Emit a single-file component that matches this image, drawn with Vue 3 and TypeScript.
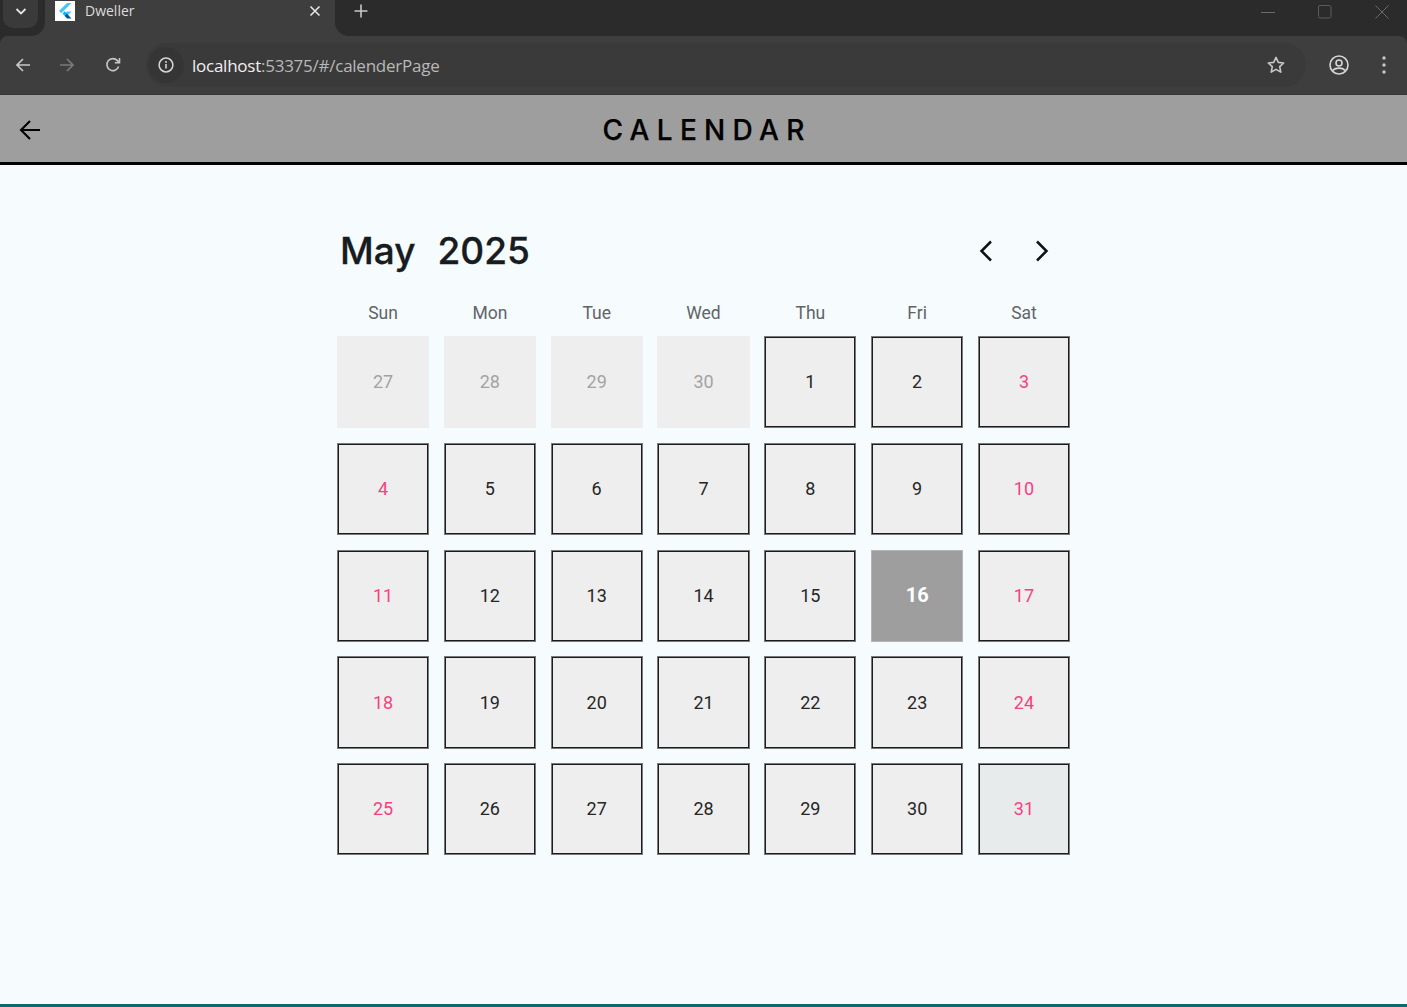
<script setup lang="ts">
import { computed } from 'vue'

type DayCell = { label: number; outside: boolean; weekend: boolean; today: boolean; last: boolean }

const weekdays = ['Sun', 'Mon', 'Tue', 'Wed', 'Thu', 'Fri', 'Sat']

// April tail + all of May 2025
const days = computed<DayCell[]>(() => {
  const list: DayCell[] = []
  for (let d = 27; d <= 30; d++) {
    list.push({ label: d, outside: true, weekend: false, today: false, last: false })
  }
  for (let d = 1; d <= 31; d++) {
    const col = (d + 3) % 7
    list.push({
      label: d,
      outside: false,
      weekend: col === 0 || col === 6,
      today: d === 16,
      last: d === 31,
    })
  }
  return list
})
</script>

<template>
  <div class="page">
    <header class="browser">
      <div class="tabstrip">
        <div class="strip-left">
          <button class="tab-search">
            <svg width="12" height="12" viewBox="0 0 12 12"><path d="M1.500 4l4.500 4.500L10.500 4" fill="none" stroke="#e3e3e3" stroke-width="1.800" /></svg>
          </button>
        </div>
        <div class="tab">
          <span class="favicon">
            <svg width="20" height="20" viewBox="0 0 20 20">
              <path d="M12 2h4.500L6.300 12.200 4 10z" fill="#47c5fb" />
              <path d="M12 10.500h4.500l-4.300 4.300-2.200-2.300z" fill="#47c5fb" />
              <path d="M9.500 14.700l2.300-2.300 4.700 5.100H12z" fill="#00569e" />
              <path d="M7.500 12.500l2.300-2.300 2.200 2.300-2.300 2.300z" fill="#00b5f8" />
            </svg>
          </span>
          <span class="tab-title">Dweller</span>
          <svg class="tab-close" width="12" height="12" viewBox="0 0 12 12"><path d="M1.500 1.500l9 9M10.500 1.500l-9 9" stroke="#e6e6e6" stroke-width="1.600" /></svg>
        </div>
        <div class="strip-right">
          <svg class="new-tab" width="14" height="14" viewBox="0 0 14 14"><path d="M7 .5v13M.5 7h13" stroke="#c7c7c7" stroke-width="1.600" /></svg>
          <div class="win-controls">
            <svg width="14" height="14" viewBox="0 0 14 14"><path d="M0 7.500h14" stroke="#6a6a6a" /></svg>
            <svg width="14" height="14" viewBox="0 0 14 14"><rect x=".5" y=".5" width="12.500" height="12.500" rx="1.500" fill="none" stroke="#5c5c5c" /></svg>
            <svg width="14" height="14" viewBox="0 0 14 14"><path d="M.5.5l13 13M13.500.5l-13 13" stroke="#6a6a6a" /></svg>
          </div>
        </div>
      </div>
      <div class="toolbar">
        <svg class="nav-icon" width="16" height="16" viewBox="0 0 16 16"><path d="M15 8H2M8 2L2 8l6 6" fill="none" stroke="#c7c7c7" stroke-width="1.700" /></svg>
        <svg class="nav-icon" width="16" height="16" viewBox="0 0 16 16"><path d="M1 8h13M8 2l6 6-6 6" fill="none" stroke="#7a7a7a" stroke-width="1.700" /></svg>
        <svg class="nav-icon" width="16" height="16" viewBox="0 0 16 16"><path d="M13.600 9.500A6 6 0 1 1 12.400 3.600L14 5.200M14.500 1v4.700H9.800" fill="none" stroke="#c7c7c7" stroke-width="1.600" /></svg>
        <div class="omnibox">
          <span class="info">
            <svg width="16" height="16" viewBox="0 0 16 16"><circle cx="8" cy="8" r="6.900" fill="none" stroke="#d6d6d6" stroke-width="1.500" /><path d="M8 7v4.600" stroke="#d6d6d6" stroke-width="1.600" /><circle cx="8" cy="4.900" r="1" fill="#d6d6d6" /></svg>
          </span>
          <span class="url"><b>localhost</b>:53375/#/calenderPage</span>
          <svg class="star" width="20" height="20" viewBox="0 0 20 20"><path d="M10 2.400l2.300 5 5.400.6-4 3.700 1.100 5.400L10 14.400l-4.800 2.700 1.100-5.400-4-3.700 5.400-.6z" fill="none" stroke="#c7c7c7" stroke-width="1.600" stroke-linejoin="round" /></svg>
        </div>
        <svg class="profile" width="20" height="20" viewBox="0 0 20 20"><circle cx="10" cy="10" r="9" fill="none" stroke="#d6d6d6" stroke-width="1.600" /><circle cx="10" cy="8" r="3" fill="none" stroke="#d6d6d6" stroke-width="1.600" /><path d="M3.800 15.400c3-3 9.400-3 12.400 0" fill="none" stroke="#d6d6d6" stroke-width="1.600" /></svg>
        <svg class="menu" width="4" height="18" viewBox="0 0 4 18"><circle cx="2" cy="2" r="1.700" fill="#c7c7c7" /><circle cx="2" cy="9" r="1.700" fill="#c7c7c7" /><circle cx="2" cy="16" r="1.700" fill="#c7c7c7" /></svg>
      </div>
    </header>

    <div class="appbar">
      <svg class="back" width="24" height="24" viewBox="0 0 24 24"><path d="M22 12H3M12 3l-9 9 9 9" fill="none" stroke="#000" stroke-width="2.100" /></svg>
      <h1 class="appbar-title">CALENDAR</h1>
    </div>

    <main class="content">
      <section class="calendar">
        <div class="month-row">
          <h2 class="month"><span>May</span><span>2025</span></h2>
          <div class="month-nav">
            <svg width="16" height="24" viewBox="0 0 16 24"><path d="M13 2.500L3.500 12l9.500 9.500" fill="none" stroke="#111" stroke-width="2.500" /></svg>
            <svg width="16" height="24" viewBox="0 0 16 24"><path d="M3 2.500l9.500 9.500L3 21.500" fill="none" stroke="#111" stroke-width="2.500" /></svg>
          </div>
        </div>
        <div class="weekdays">
          <span v-for="w in weekdays" :key="w">{{ w }}</span>
        </div>
        <div class="days">
          <div
            v-for="(cell, i) in days"
            :key="i"
            class="day"
            :class="{ outside: cell.outside, weekend: cell.weekend, today: cell.today, last: cell.last }"
          >
            {{ cell.label }}
          </div>
        </div>
      </section>
    </main>
  </div>
</template>

<style>
html,
body {
  margin: 0;
  overflow: hidden;
}
</style>

<style scoped>
.page {
  height: 1007px;
  display: flex;
  flex-direction: column;
  background: #f6fbfe;
  font-family: Roboto, "Liberation Sans", sans-serif;
}

.browser {
  background: #2b2b2b;
  font-family: "Open Sans", "Noto Sans", sans-serif;
}

.tabstrip {
  height: 36px;
  display: flex;
  background: #3e3e3e;
}

.strip-left {
  width: 45px;
  box-sizing: border-box;
  padding-left: 3px;
  background: #2b2b2b;
  border-bottom-right-radius: 14px;
}

.tab-search {
  width: 35px;
  height: 28px;
  padding: 0 0 6px;
  border: none;
  display: flex;
  align-items: center;
  justify-content: center;
  background: #3a3a3a;
  border-radius: 0 0 10px 10px;
}

.tab {
  width: 290px;
  height: 22px;
  box-sizing: border-box;
  padding: 0 14px 0 10px;
  display: flex;
  align-items: center;
  color: #dcdcdc;
}

.favicon {
  width: 20px;
  height: 20px;
  background: #fff;
}

.tab-title {
  flex: 1;
  margin-left: 10px;
  font-size: 14px;
  line-height: 20px;
}

.strip-right {
  flex: 1;
  display: flex;
  align-items: flex-start;
  padding: 4px 18px 0 19px;
  background: #2b2b2b;
  border-bottom-left-radius: 14px;
}

.win-controls {
  margin-left: auto;
  display: flex;
  gap: 43px;
  padding-top: 1px;
}

.toolbar {
  height: 59px;
  box-sizing: border-box;
  display: flex;
  align-items: center;
  padding: 0 15px;
  background: #3e3e3e;
  border-radius: 8px 8px 0 0;
  border-bottom: 1px solid #363636;
}

.nav-icon {
  margin-right: 28px;
}

.nav-icon:nth-child(2) {
  margin-right: 30px;
}

.nav-icon:nth-child(3) {
  margin-right: 25px;
}

.omnibox {
  width: 1160px;
  height: 44px;
  display: flex;
  align-items: center;
  box-sizing: border-box;
  padding: 0 20px 0 2px;
  background: #3a3a3a;
  border-radius: 22px;
}

.info {
  width: 36px;
  height: 36px;
  display: flex;
  align-items: center;
  justify-content: center;
  background: #353535;
  border-radius: 50%;
}

.url {
  flex: 1;
  margin-left: 8px;
  font-size: 17px;
  color: #b8b8b8;
  letter-spacing: -0.25px;
}

.url b {
  font-weight: 400;
  color: #f0f0f0;
}

.profile {
  margin-left: 23px;
}

.menu {
  margin-left: 33px;
}

.appbar {
  height: 70px;
  box-sizing: border-box;
  position: relative;
  display: flex;
  align-items: center;
  justify-content: center;
  background: #9e9e9e;
  border-bottom: 3px solid #000;
}

.back {
  position: absolute;
  left: 18px;
  top: 23px;
}

.appbar-title {
  margin: 2px 0 0;
  padding-left: 7px;
  font-family: Inter, "Liberation Sans", sans-serif;
  font-size: 28px;
  font-weight: 500;
  letter-spacing: 7.300px;
  color: #000;
  -webkit-text-stroke: 0.25px #000;
}

.content {
  flex: 1;
  display: flex;
  justify-content: center;
  padding-top: 66px;
  box-sizing: border-box;
  border-bottom: 3px solid #0f6a6e;
}

.calendar {
  width: 733px;
}

.month-row {
  height: 40px;
  display: flex;
  align-items: center;
  justify-content: space-between;
  padding-left: 3px;
}

.month {
  margin: 0;
  display: flex;
  gap: 22px;
  font-family: Inter, "Liberation Sans", sans-serif;
  font-size: 37px;
  font-weight: 500;
  line-height: 40px;
  color: #171c20;
  -webkit-text-stroke: 0.3px #171c20;
}

.month-nav {
  display: flex;
  gap: 40px;
  margin-right: 20px;
}

.weekdays {
  height: 40px;
  margin-top: 25px;
  display: grid;
  grid-template-columns: repeat(7, 1fr);
  column-gap: 14.800px;
  box-sizing: border-box;
  padding-top: 6px;
  text-align: center;
  font-size: 17.500px;
  line-height: 22px;
  color: #5f6468;
}

.days {
  display: grid;
  grid-template-columns: repeat(7, 1fr);
  gap: 14.800px;
}

.day {
  aspect-ratio: 1;
  box-sizing: border-box;
  display: flex;
  align-items: center;
  justify-content: center;
  padding-bottom: 1px;
  border: 1px solid #7a7a7a;
  box-shadow: inset 0 0 0 1px #1c1c1c;
  background: #eeeeee;
  font-size: 18px;
  color: #262626;
}

.day.weekend {
  color: #f5417f;
}

.day.outside {
  border-color: transparent;
  box-shadow: none;
  color: #a3a3a3;
}

.day.today {
  border-color: #b5b5b5;
  box-shadow: none;
  background: #9e9e9e;
  color: #fff;
  font-size: 20px;
  font-weight: 700;
}

.day.last {
  background: #e8ebec;
}
</style>
